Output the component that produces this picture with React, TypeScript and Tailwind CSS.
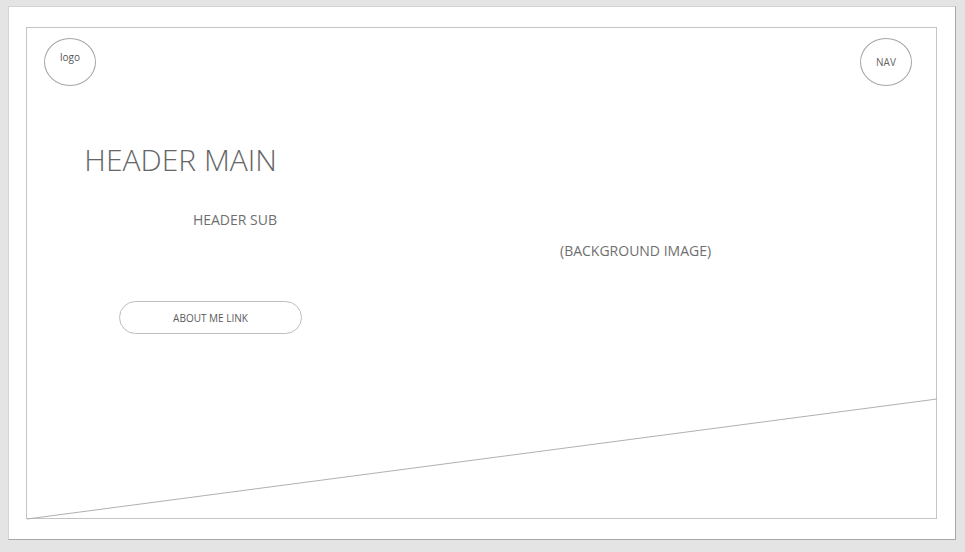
import React from 'react';

// Wireframe hero: logo + nav bubbles, headings, link pill and a diagonal divider
export default function App() {
    const font = { fontFamily: '"Open Sans", "Noto Sans", sans-serif' };

    return (
        <div className="w-[965px] h-[552px] bg-[#e4e4e4] pt-[6px] pl-[8px]" style={font}>
            <div className="w-[948px] h-[534px] bg-white border border-t-[#d4d4d4] border-l-[#d4d4d4] border-r-[#a8a8a8] border-b-[#a8a8a8] pt-[20px] pl-[17px]">
                <div className="relative w-[911px] h-[492px] border border-[#c4c4c4]">
                    {/* Diagonal divider */}
                    <svg className="absolute inset-0 pointer-events-none" width="911" height="492" viewBox="0 0 911 492">
                        <line x1="0" y1="491" x2="910" y2="371" stroke="#b0b0b0" strokeWidth="1" />
                    </svg>

                    {/* Top bar */}
                    <div className="flex justify-between pl-[17px] pr-[24px] pt-[10px]">
                        <div className="w-[52px] h-[48px] rounded-[50%] border border-[#a6a6a6] flex justify-center pt-[13px] text-[10px] leading-none text-[#555]">
                            logo
                        </div>
                        <div className="w-[52px] h-[48px] rounded-[50%] border border-[#a6a6a6] flex items-center justify-center text-[10px] leading-none text-[#666]">
                            NAV
                        </div>
                    </div>

                    {/* Headings */}
                    <div className="flex">
                        <div className="ml-[59px] mt-[59px] flex flex-col items-end w-[191px]">
                            <h1 className="text-[30px] leading-none font-light text-[#666] whitespace-nowrap">HEADER MAIN</h1>
                            <p className="mt-[38px] text-[14px] leading-none text-[#6f6f6f] whitespace-nowrap">HEADER SUB</p>
                        </div>
                        <p className="ml-[283px] mt-[158px] text-[14px] leading-none text-[#6f6f6f] whitespace-nowrap">(BACKGROUND IMAGE)</p>
                    </div>

                    {/* Link pill */}
                    <div className="ml-[92px] mt-[43px] w-[183px] h-[33px] rounded-full border border-[#bdbdbd] flex items-center justify-center text-[10px] leading-none text-[#5a5a5a]">
                        ABOUT ME LINK
                    </div>
                </div>
            </div>
        </div>
    );
}
